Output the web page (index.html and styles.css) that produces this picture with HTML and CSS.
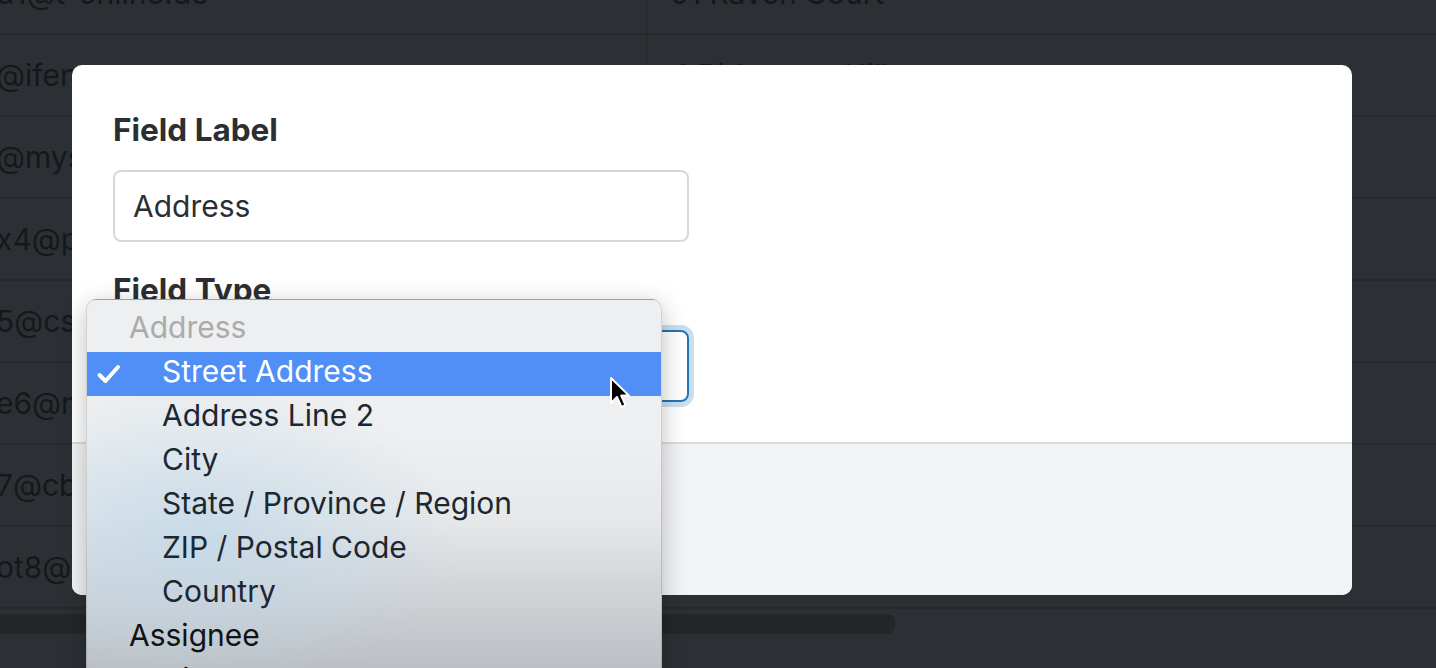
FILE: index.html
```html
<!DOCTYPE html>
<html lang="en">
<head>
<meta charset="utf-8">
<title>Field editor</title>
<link rel="stylesheet" href="styles.css">
</head>
<body>
<div class="page">
  <div class="table">
    <div class="row"><div class="cell c1">d1@t-online.de</div><div class="cell c2">01 Raven Court</div></div>
    <div class="row"><div class="cell c1">@ifeng.com</div><div class="cell c2">4 Ridgeway Hill</div></div>
    <div class="row"><div class="cell c1">@mysql.com</div><div class="cell c2">7 Mallard Lane</div></div>
    <div class="row"><div class="cell c1">x4@photobucket.com</div><div class="cell c2">22 Oak Street</div></div>
    <div class="row"><div class="cell c1">5@csmonitor.com</div><div class="cell c2">9 Elm Terrace</div></div>
    <div class="row"><div class="cell c1">e6@nba.com</div><div class="cell c2">3 Birch Road</div></div>
    <div class="row"><div class="cell c1">7@cbc.ca</div><div class="cell c2">18 Pine Avenue</div></div>
    <div class="row"><div class="cell c1">ot8@yahoo.com</div><div class="cell c2">5 Cedar Way</div></div>
  </div>
  <div class="scrollbar"><div class="thumb"></div></div>
</div>

<div class="modal">
  <div class="modal-body">
    <div class="form-group">
      <label class="label">Field Label</label>
      <div class="input">Address</div>
    </div>
    <div class="form-group last">
      <label class="label">Field Type</label>
      <div class="input select">Street Address</div>
    </div>
  </div>
  <div class="modal-footer"></div>
</div>

<div class="menu">
  <div class="opt group">Address</div>
  <div class="opt sub selected"><svg class="check" width="26" height="22" viewBox="0 0 26 22"><path d="M3.5 12 L9.5 18 L22 4" fill="none" stroke="#fff" stroke-width="4" stroke-linecap="round" stroke-linejoin="round"/></svg>Street Address</div>
  <div class="opt sub">Address Line 2</div>
  <div class="opt sub">City</div>
  <div class="opt sub">State / Province / Region</div>
  <div class="opt sub">ZIP / Postal Code</div>
  <div class="opt sub">Country</div>
  <div class="opt top">Assignee</div>
  <div class="opt top">Business Hours</div>
</div>

<svg class="cursor" width="24" height="36" viewBox="0 0 24 36">
  <path d="M2 2 L2 27 L8 21 L12.5 31 L16.5 29.2 L12.2 19.6 L20 19.6 Z" fill="#000" stroke="#fff" stroke-width="2" stroke-linejoin="round"/>
</svg>
</body>
</html>
```
FILE: styles.css
```css
html, body {
  margin: 0;
  padding: 0;
  height: 100%;
  overflow: hidden;
  background: #2c3034;
}

.page {
  font-family: "Inter", "Liberation Sans", sans-serif;
}

.table {
  margin-top: -47px;
  margin-left: -4px;
}

.row {
  display: flex;
  height: 80px;
  border-bottom: 2px solid #25292c;
}

.cell {
  display: flex;
  align-items: center;
  font-size: 30px;
  color: #15181b;
  white-space: nowrap;
  overflow: hidden;
}

.c1 {
  width: 650px;
  border-right: 2px solid #272b2e;
}

.c2 {
  padding-left: 22px;
}

.scrollbar {
  padding: 5px 0 0 0;
}

.thumb {
  width: 895px;
  height: 20px;
  background: #23272a;
  border-radius: 0 8px 8px 0;
}

.modal {
  position: absolute;
  left: 72px;
  top: 65px;
  width: 1280px;
  height: 530px;
  background: #fff;
  border-radius: 10px;
  overflow: hidden;
  display: flex;
  flex-direction: column;
  font-family: "Inter", "Liberation Sans", sans-serif;
  color: #2b2f33;
}

.modal-body {
  padding: 41px 41px 40px;
}

.form-group {
  margin-bottom: 24px;
}

.form-group.last {
  margin-bottom: 0;
}

.label {
  display: block;
  font-weight: 700;
  font-size: 31.5px;
  line-height: 48px;
  margin-bottom: 16px;
  color: #2b2f33;
}

.input {
  box-sizing: border-box;
  width: 576px;
  height: 72px;
  border: 2px solid #d6d8db;
  border-radius: 8px;
  padding-left: 18px;
  display: flex;
  align-items: center;
  font-size: 30px;
  color: #2b2f33;
}

.select {
  border-color: #2375b4;
  box-shadow: 0 0 0 5px #c9dfee;
}

.modal-footer {
  flex: 1;
  background: #f2f3f5;
  border-top: 2px solid #d9dbde;
}

.menu {
  position: absolute;
  left: 86px;
  top: 299px;
  width: 576px;
  height: 400px;
  box-sizing: border-box;
  padding-top: 5px;
  border: 1px solid rgba(0, 0, 0, 0.12);
  border-radius: 10px 10px 0 0;
  background:
    radial-gradient(ellipse 260px 160px at 110px 240px, rgba(190, 215, 232, 0.75), rgba(190, 215, 232, 0) 100%),
    linear-gradient(to bottom, #eeeff0 0%, #eeeff0 35%, #e6e8ea 55%, #c9ccd0 80%, #b3b6ba 100%);
  box-shadow: 0 6px 24px rgba(0, 0, 0, 0.25);
  font-family: "Inter", "Liberation Sans", sans-serif;
  font-size: 30px;
}

.opt {
  box-sizing: border-box;
  height: 44px;
  display: flex;
  align-items: center;
  white-space: nowrap;
  position: relative;
}

.group {
  padding-left: 42px;
  color: #ababab;
}

.sub {
  padding-left: 75px;
  color: #1c2731;
}

.top {
  padding-left: 42px;
  color: #101214;
}

.selected {
  background: #4f8ff6;
  color: #fff;
  margin-top: 3px;
  margin-bottom: -3px;
  padding-bottom: 6px;
}

.check {
  position: absolute;
  left: 9px;
  top: 11px;
}

.cursor {
  position: absolute;
  left: 609px;
  top: 376px;
}
```
